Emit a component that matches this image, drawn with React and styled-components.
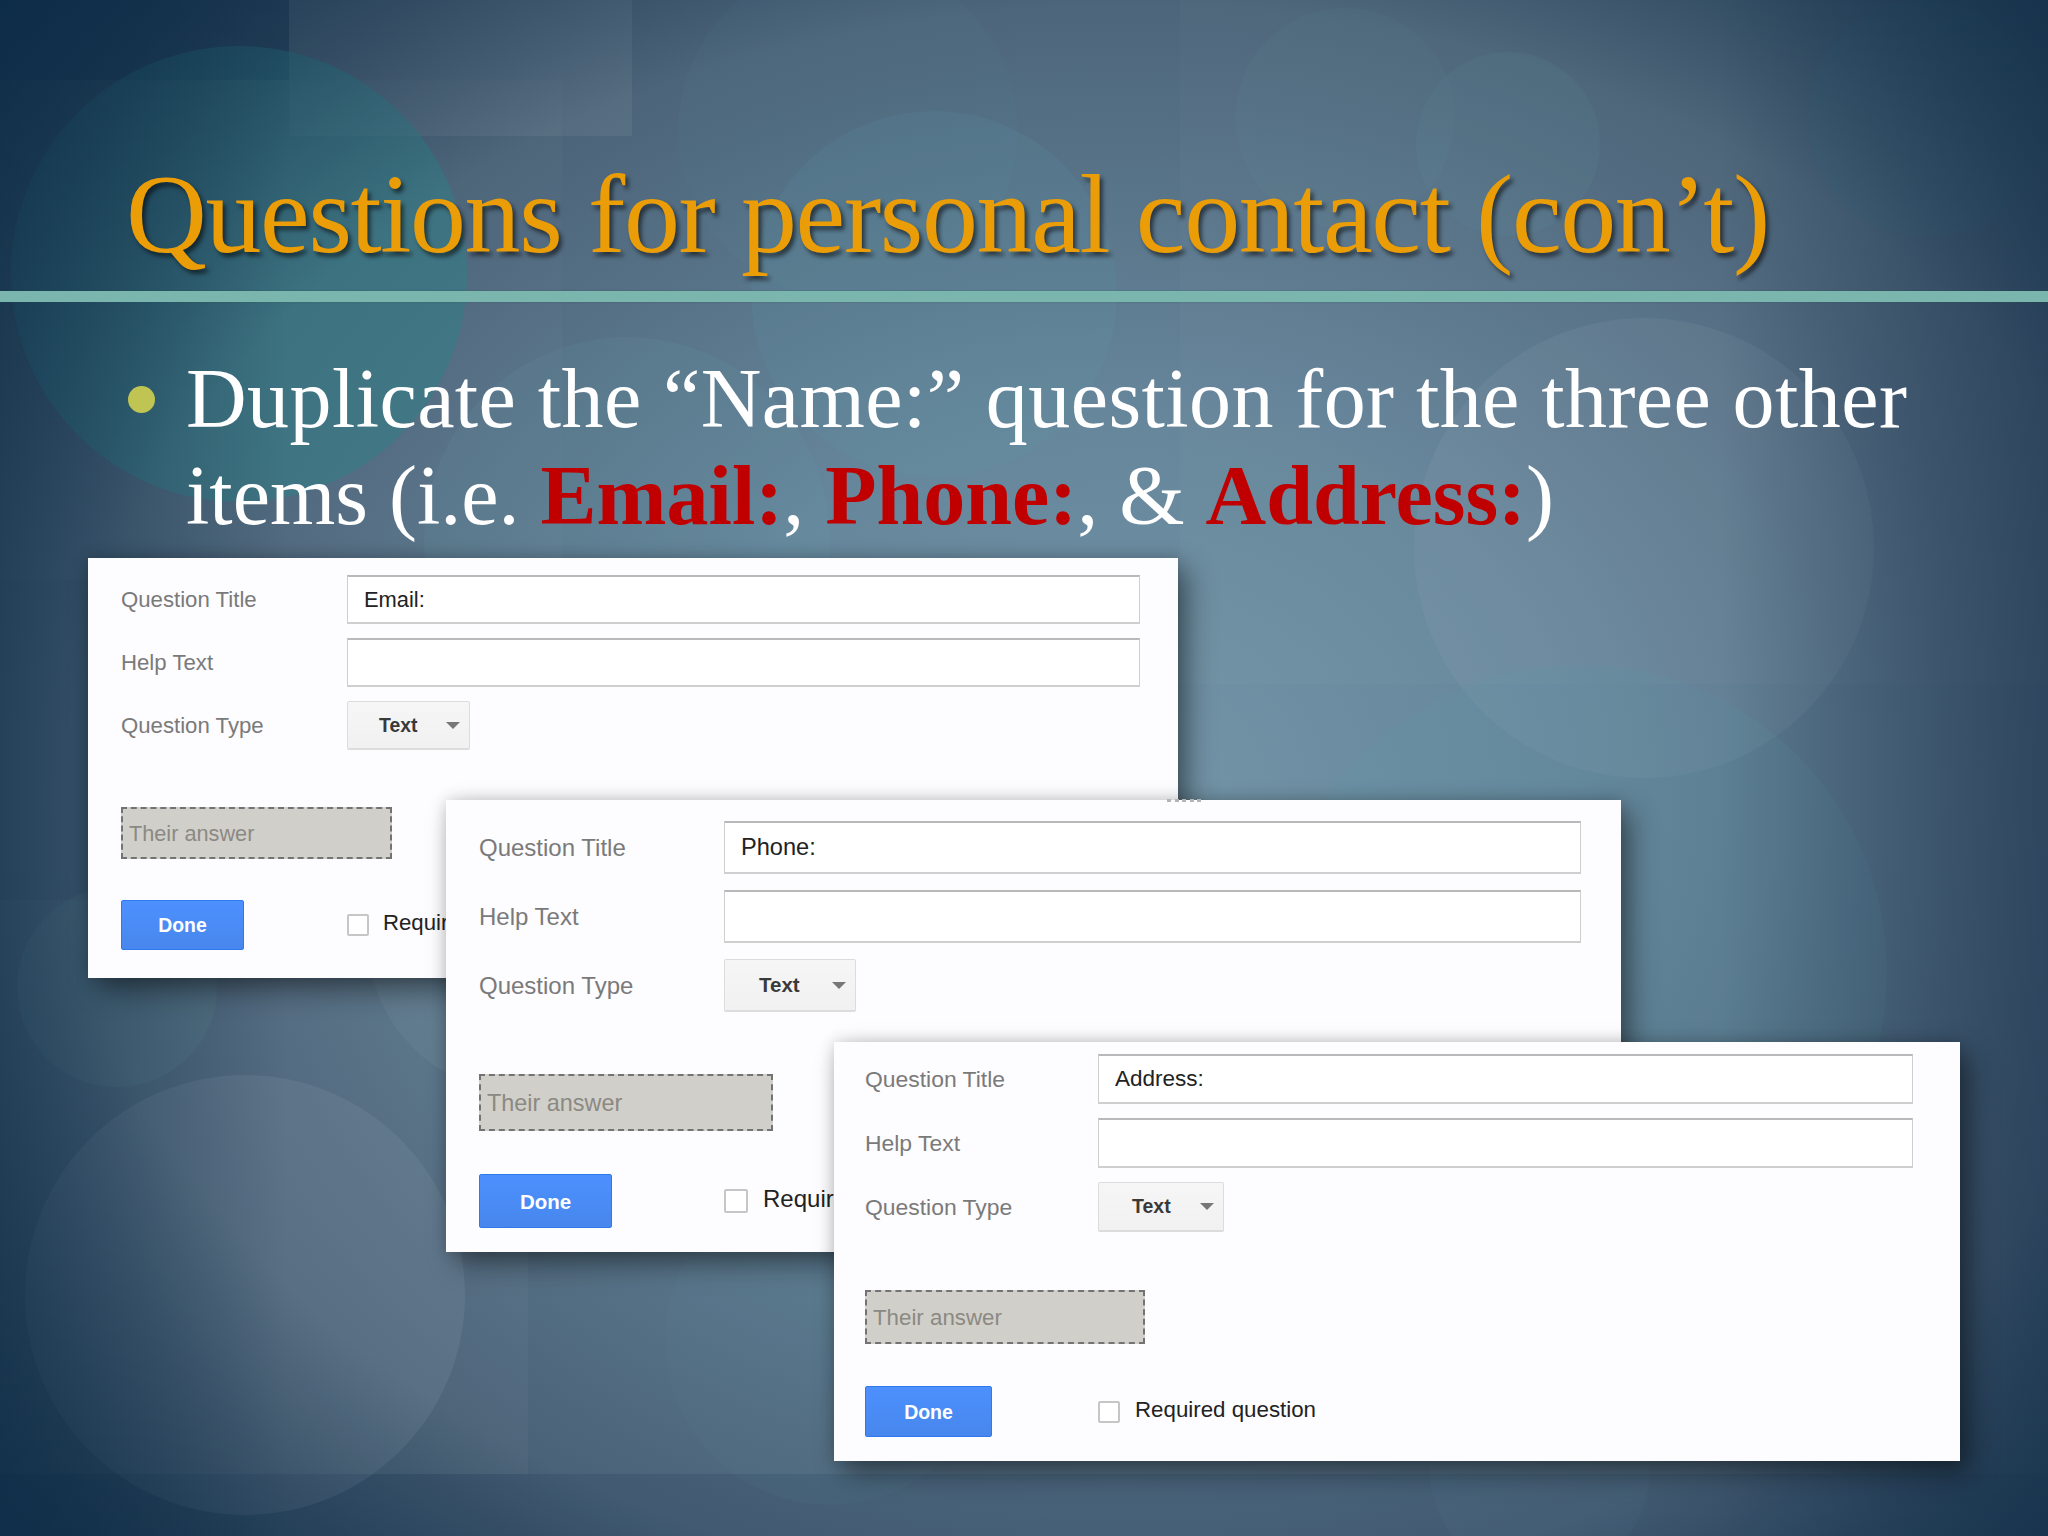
import React from 'react'
import styled, { createGlobalStyle } from 'styled-components'

const GlobalStyle = createGlobalStyle`
  html, body {
    margin: 0;
    padding: 0;
    background: #1c3a52;
  }
`

const Slide = styled.div`
  position: relative;
  width: 2048px;
  height: 1536px;
  overflow: hidden;
  background: radial-gradient(
    ellipse 1500px 1250px at 1120px 790px,
    #7495a8 0%,
    #66869b 30%,
    #4f687d 60%,
    #3a5166 85%,
    #2a4259 100%
  );
  font-family: 'Liberation Sans', Arial, sans-serif;
`

const Backdrop = styled.svg`
  position: absolute;
  left: 0;
  top: 0;
`

const Content = styled.div`
  position: relative;
  padding-top: 151px;
`

const Title = styled.h1`
  margin: 0;
  padding-left: 126px;
  height: 140px;
  font-family: 'Liberation Serif', 'Times New Roman', serif;
  font-size: 112px;
  line-height: 127px;
  font-weight: 400;
  letter-spacing: -1.4px;
  color: #eb9d08;
  text-shadow: 3px 4px 4px rgba(0, 0, 0, 0.55);
  white-space: nowrap;
`

const Rule = styled.div`
  height: 11px;
  background: #7ab5ae;
  box-shadow: 0 0 2px rgba(40, 80, 90, 0.4);
`

const Bullet = styled.div`
  display: flex;
  margin-top: 48px;
  padding-left: 128px;
`

const Dot = styled.span`
  flex: none;
  width: 27px;
  height: 27px;
  margin-top: 36px;
  margin-right: 31px;
  border-radius: 50%;
  background: #bfc452;
`

const BulletText = styled.p`
  margin: 0;
  width: 1760px;
  font-family: 'Liberation Serif', 'Times New Roman', serif;
  font-size: 84px;
  line-height: 97px;
  color: #fff;
  white-space: nowrap;
`

const Line = styled.span`
  display: block;
  letter-spacing: ${p => p.$ls || 0}px;
`

const Red = styled.b`
  color: #c00000;
`

const Panel = styled.section`
  position: absolute;
  left: ${p => p.$x}px;
  top: ${p => p.$y}px;
  box-sizing: border-box;
  width: ${p => p.$w}px;
  height: ${p => p.$h}px;
  padding: ${p => p.$top}px 0 0 ${p => p.$left}px;
  background: #fdfcfe;
  box-shadow: 10px 12px 26px rgba(0, 0, 0, 0.42), 0 0 14px rgba(0, 0, 0, 0.16);
  overflow: hidden;
`

const Row = styled.div`
  display: flex;
  align-items: center;
  height: ${p => p.$h}px;
  margin-bottom: ${p => p.$gap}px;
`

const Label = styled.div`
  flex: none;
  width: ${p => p.$w}px;
  font-size: ${p => p.$fs}px;
  color: #7a7a7a;
`

const Input = styled.div`
  box-sizing: border-box;
  display: flex;
  align-items: center;
  width: ${p => p.$w}px;
  height: 100%;
  padding-left: 16px;
  background: #fff;
  border: 1px solid #cfcfcf;
  border-top: 2px solid #b9b9b9;
  border-bottom-width: 2px;
  font-size: ${p => p.$fs}px;
  color: #222;
`

const Select = styled.div`
  box-sizing: border-box;
  display: flex;
  align-items: center;
  justify-content: space-between;
  width: ${p => p.$w}px;
  height: 100%;
  padding: 0 9px 0 ${p => p.$pad}px;
  background: linear-gradient(#f6f6f6, #f1f1f1);
  border: 1px solid #dcdcdc;
  border-bottom-width: 2px;
  border-radius: 2px;
  font-size: ${p => p.$fs}px;
  font-weight: 700;
  color: #3a3a3a;
`

const Caret = styled.span`
  width: 0;
  height: 0;
  border-left: 7px solid transparent;
  border-right: 7px solid transparent;
  border-top: 7px solid #777;
`

const Answer = styled.div`
  box-sizing: border-box;
  display: flex;
  align-items: center;
  width: ${p => p.$w}px;
  height: ${p => p.$h}px;
  margin-top: ${p => p.$mt}px;
  padding: 2px 0 0 6px;
  background: #d1cfc9;
  border: 2px dashed #737373;
  font-size: ${p => p.$fs}px;
  color: #8b8983;
`

const Footer = styled.div`
  display: flex;
  align-items: center;
  margin-top: ${p => p.$mt}px;
`

const Done = styled.button`
  flex: none;
  width: ${p => p.$w}px;
  height: ${p => p.$h}px;
  margin-right: ${p => p.$gap}px;
  padding: 1px 0 0;
  background: linear-gradient(#4d90fe, #4787ed);
  border: 1px solid #3079ed;
  border-radius: 2px;
  font-family: inherit;
  font-size: ${p => p.$fs}px;
  font-weight: 700;
  color: #fff;
`

const Check = styled.span`
  flex: none;
  box-sizing: border-box;
  width: ${p => p.$s}px;
  height: ${p => p.$s}px;
  margin-right: ${p => p.$gap}px;
  background: #fff;
  border: 2px solid #c6c6c6;
  border-radius: 2px;
`

const Required = styled.span`
  font-size: ${p => p.$fs}px;
  color: #222;
  white-space: nowrap;
  transform: translateY(-2px);
`

const Grip = styled.div`
  position: absolute;
  left: 1167px;
  top: 799px;
  width: 35px;
  height: 3px;
  background: repeating-linear-gradient(90deg, #b4b4b4 0 4px, transparent 4px 7.5px);
`

const panels = [
  {
    value: 'Email:', x: 88, y: 558, w: 1090, h: 420, top: 17, left: 33,
    labelW: 226, inputW: 793, rowH: 49, gap: 14, selectW: 123, selectPad: 31,
    answerW: 271, answerH: 52, answerMt: 57, footMt: 41,
    doneW: 123, doneH: 50, doneGap: 103, check: 22, checkGap: 14,
    fs: 22.2, textFs: 21.9, boldFs: 19.4, answerFs: 21.7, reqFs: 22.2,
  },
  {
    value: 'Phone:', x: 446, y: 800, w: 1175, h: 452, top: 21, left: 33,
    labelW: 245, inputW: 857, rowH: 53, gap: 16, selectW: 132, selectPad: 34,
    answerW: 294, answerH: 57, answerMt: 62, footMt: 43,
    doneW: 133, doneH: 54, doneGap: 112, check: 24, checkGap: 15,
    fs: 24, textFs: 23.6, boldFs: 20.5, answerFs: 23.4, reqFs: 24,
  },
  {
    value: 'Address:', x: 834, y: 1042, w: 1126, h: 419, top: 12, left: 31,
    labelW: 233, inputW: 815, rowH: 50, gap: 14, selectW: 126, selectPad: 33,
    answerW: 280, answerH: 54, answerMt: 58, footMt: 42,
    doneW: 127, doneH: 51, doneGap: 106, check: 22, checkGap: 15,
    fs: 22.9, textFs: 22.5, boldFs: 19.5, answerFs: 22.3, reqFs: 22.3,
  },
]

const QuestionPanel = ({ p }) => (
  <Panel $x={p.x} $y={p.y} $w={p.w} $h={p.h} $top={p.top} $left={p.left}>
    <Row $h={p.rowH} $gap={p.gap}>
      <Label $w={p.labelW} $fs={p.fs}>Question Title</Label>
      <Input $w={p.inputW} $fs={p.textFs}>{p.value}</Input>
    </Row>
    <Row $h={p.rowH} $gap={p.gap}>
      <Label $w={p.labelW} $fs={p.fs}>Help Text</Label>
      <Input $w={p.inputW} $fs={p.textFs} />
    </Row>
    <Row $h={p.rowH} $gap={0}>
      <Label $w={p.labelW} $fs={p.fs}>Question Type</Label>
      <Select $w={p.selectW} $pad={p.selectPad} $fs={p.boldFs}>
        Text
        <Caret />
      </Select>
    </Row>
    <Answer $w={p.answerW} $h={p.answerH} $mt={p.answerMt} $fs={p.answerFs}>
      Their answer
    </Answer>
    <Footer $mt={p.footMt}>
      <Done $w={p.doneW} $h={p.doneH} $gap={p.doneGap} $fs={p.boldFs}>Done</Done>
      <Check $s={p.check} $gap={p.checkGap} />
      <Required $fs={p.reqFs}>Required question</Required>
    </Footer>
  </Panel>
)

const Background = () => (
  <Backdrop width="2048" height="1536" viewBox="0 0 2048 1536">
    <defs>
      <radialGradient id="edge" cx="0.55" cy="0.52" r="0.76">
        <stop offset="0.68" stopColor="#0b2a45" stopOpacity="0" />
        <stop offset="1" stopColor="#0b2a45" stopOpacity="0.85" />
      </radialGradient>
      <linearGradient id="sides" x1="0" x2="1" y1="0" y2="0">
        <stop offset="0" stopColor="#13324d" stopOpacity="0.55" />
        <stop offset="0.14" stopColor="#13324d" stopOpacity="0" />
        <stop offset="0.84" stopColor="#1d3650" stopOpacity="0" />
        <stop offset="1" stopColor="#1d3650" stopOpacity="0.65" />
      </linearGradient>
    </defs>
    <rect x="0" y="0" width="289" height="80" fill="#0e2c4c" opacity="0.3" />
    <rect x="289" y="0" width="343" height="136" fill="#fff" opacity="0.06" />
    <rect x="0" y="80" width="562" height="500" fill="#fff" opacity="0.02" />
    <rect x="1180" y="0" width="868" height="684" fill="#fff" opacity="0.02" />
    <rect x="0" y="900" width="528" height="574" fill="#fff" opacity="0.03" />
    <rect x="0" y="1474" width="2048" height="62" fill="#0e2c4c" opacity="0.14" />
    <circle cx="848" cy="130" r="170" fill="#5f9aa8" opacity="0.05" />
    <circle cx="1345" cy="118" r="110" fill="#7fa9b0" opacity="0.05" />
    <circle cx="1508" cy="144" r="92" fill="#5f9aa8" opacity="0.1" />
    <circle cx="1926" cy="118" r="118" fill="#2f7383" opacity="0.15" />
    <circle cx="934" cy="294" r="183" fill="#5f9aa8" opacity="0.14" />
    <circle cx="627" cy="540" r="203" fill="#6ba2ad" opacity="0.1" />
    <circle cx="239" cy="274" r="228" fill="#2d7f88" opacity="0.5" />
    <circle cx="1644" cy="548" r="230" fill="#9ab0ba" opacity="0.12" />
    <circle cx="1580" cy="972" r="307" fill="#5f9aa8" opacity="0.14" />
    <circle cx="117" cy="987" r="100" fill="#5d8a8f" opacity="0.2" />
    <circle cx="520" cy="940" r="152" fill="#8aa5b0" opacity="0.14" />
    <circle cx="245" cy="1295" r="220" fill="#8397a8" opacity="0.22" />
    <circle cx="830" cy="1340" r="165" fill="#5f9aa8" opacity="0.06" />
    <circle cx="1540" cy="1470" r="110" fill="#5f9aa8" opacity="0.06" />
    <rect x="0" y="0" width="2048" height="1536" fill="url(#sides)" />
    <rect x="0" y="0" width="2048" height="1536" fill="url(#edge)" />
  </Backdrop>
)

const App = () => (
  <Slide>
    <GlobalStyle />
    <Background />
    <Content>
      <Title>Questions for personal contact (con’t)</Title>
      <Rule />
      <Bullet>
        <Dot />
        <BulletText>
          <Line $ls={0.42}>Duplicate the “Name:” question for the three other</Line>
          <Line>
            items (i.e. <Red>Email:</Red>, <Red>Phone:</Red>, &amp; <Red>Address:</Red>)
          </Line>
        </BulletText>
      </Bullet>
    </Content>
    <QuestionPanel p={panels[0]} />
    <QuestionPanel p={panels[1]} />
    <Grip />
    <QuestionPanel p={panels[2]} />
  </Slide>
)

export default App
